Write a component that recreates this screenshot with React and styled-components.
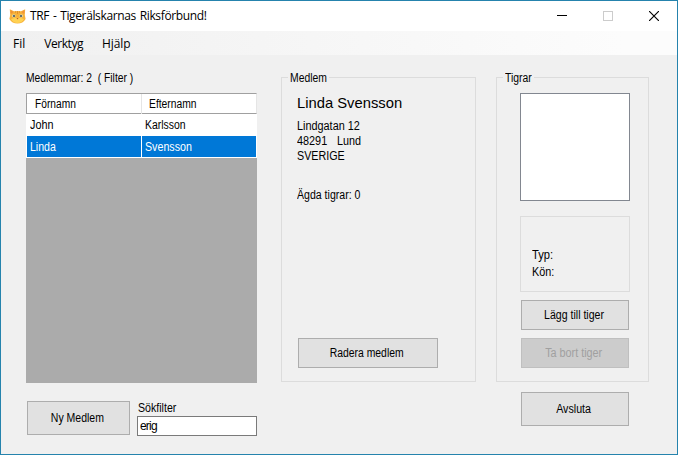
import React from "react";
import styled, { createGlobalStyle } from "styled-components";

const GlobalStyle = createGlobalStyle`
  * { box-sizing: border-box; }
  body { margin: 0; background: #f0f0f0; }
`;

const Window = styled.div`
  width: 678px;
  height: 455px;
  border: 1px solid #2583ad;
  background: #f0f0f0;
  display: flex;
  flex-direction: column;
  overflow: hidden;
  color: #000;
  font-family: "Liberation Sans", Arial, sans-serif;
  font-size: 12px;
`;

const TitleBar = styled.header`
  height: 30px;
  flex: none;
  display: flex;
  align-items: center;
  background: #fff;
  padding-left: 8px;
  font: 12px/28px "Open Sans", "Noto Sans", sans-serif;
`;

const TitleText = styled.div`
  flex: 1;
  margin-left: 4px;
  letter-spacing: -0.36px;
  word-spacing: 1px;
`;

const ControlButton = styled.div`
  width: 46px;
  height: 28px;
  flex: none;
  display: flex;
  align-items: center;
  justify-content: center;
`;

const MenuBar = styled.nav`
  height: 24px;
  flex: none;
  display: flex;
  padding-left: 12px;
  gap: 19px;
  background: linear-gradient(90deg, #f0f0f0, #fcfcfc 92%);
  font: 12px/25px "Open Sans", "Noto Sans", sans-serif;
`;

const MenuItem = styled.div`
  letter-spacing: ${(p) => p.$track || 0}px;
`;

const Text = styled.span`
  display: block;
  white-space: pre;
  transform: scaleX(${(p) => p.$squeeze});
  transform-origin: ${(p) => (p.$center ? "center" : "left")};
`;

const Client = styled.main`
  flex: 1;
  display: grid;
  grid-template-columns: 231px 195px 153px;
  column-gap: 24px;
  padding: 15px 0 0 25px;
  align-items: start;
`;

const Members = styled.section`
  display: flex;
  flex-direction: column;
`;

const ListCaption = styled.div`
  height: 23px;
  line-height: 16px;
`;

const Grid = styled.div`
  height: 290px;
  background: #ababab;
`;

const GridHeader = styled.div`
  display: grid;
  grid-template-columns: 115px 1fr;
  height: 21px;
  background: #fff;
  border: 1px solid #a0a0a0;
  border-right-color: #e5e5e5;
  line-height: 20px;
`;

const HeaderCell = styled.div`
  padding-left: ${(p) => p.$inset}px;
  border-right: ${(p) => (p.$divider ? "1px solid #e5e5e5" : "0")};
`;

const GridRow = styled.div`
  display: grid;
  grid-template-columns: 114px 114px;
  column-gap: 1px;
  height: 22px;
  padding: 0 1px 1px;
  background: #fff;
  line-height: 22px;
  color: ${(p) => (p.$selected ? "#fff" : "#000")};
`;

const Cell = styled.div`
  height: 21px;
  padding-left: 3px;
  background: ${(p) => (p.$selected ? "#0078d7" : "#fff")};
`;

const MemberActions = styled.div`
  display: flex;
  gap: 7px;
  margin: 18px 0 0 1px;
`;

const Button = styled.button`
  flex: none;
  display: flex;
  align-items: center;
  justify-content: center;
  width: ${(p) => p.$width}px;
  height: ${(p) => p.$height}px;
  margin: 0;
  padding: 0 2px 0 0;
  font: inherit;
  color: #000;
  background: #e1e1e1;
  border: 1px solid #adadad;
  &:disabled {
    color: #a0a0a0;
    background: #ccc;
    border-color: #bfbfbf;
  }
`;

const Field = styled.label`
  flex: 1;
  line-height: 15px;
`;

const Input = styled.input`
  display: block;
  width: 120px;
  height: 20px;
  margin: 0;
  padding: 0 2px;
  font: inherit;
  letter-spacing: -0.8px;
  background: #fff;
  border: 1px solid #7a7a7a;
  outline: none;
`;

const FieldLabel = styled.div`
  height: 15px;
  padding-left: 1px;
`;

const Group = styled.fieldset`
  min-width: 0;
  height: 312px;
  margin: 0;
  border: 1px solid #dcdcdc;
  padding: 0 0 13px ${(p) => p.$inset}px;
`;

const Legend = styled.legend`
  width: ${(p) => p.$width}px;
  margin-left: ${(p) => p.$shift}px;
  padding: 0 2px;
  height: 15px;
  line-height: 16px;
`;

const GroupBody = styled.div`
  height: 100%;
  display: flex;
  flex-direction: column;
`;

const MemberName = styled.div`
  font-size: 15px;
  line-height: 20px;
  margin-top: 8px;
`;

const Address = styled.div`
  margin-top: 6px;
  line-height: 15px;
`;

const AddressLine = styled.div`
  display: flex;
  gap: 7px;
`;

const Owned = styled.div`
  margin-top: 24px;
  line-height: 15px;
`;

const BottomAction = styled.div`
  margin: auto 0 0 1px;
`;

const TigerList = styled.div`
  width: 110px;
  height: 108px;
  margin-top: 8px;
  background: #fff;
  border: 1px solid #828790;
`;

const TigerInfo = styled.div`
  width: 110px;
  height: 76px;
  margin-top: 15px;
  padding: 30px 0 0 11px;
  border: 1px solid #dcdcdc;
  line-height: 17px;
`;

const TigerButtons = styled.div`
  display: flex;
  flex-direction: column;
  gap: 8px;
  margin: 8px 0 0 1px;
`;

const Tigers = styled.section`
  margin-left: -4px;
  width: 153px;
`;

const CloseRow = styled.div`
  margin: 10px 0 0 25px;
`;

function CatIcon() {
  return (
    <svg width="17" height="15" viewBox="0 0 17 15">
      <path d="M0.8 0.3 L5 2.3 Q8.5 1.6 12 2.3 L16.2 0.3 L15.8 6 L16.6 10 Q14 14.6 8.5 14.6 Q3 14.6 0.4 10 L1.2 6Z" fill="#f7b23a" />
      <path d="M1.4 1 L4.6 3 L1.9 5Z M15.6 1 L12.4 3 L15.1 5Z" fill="#f0923a" />
      <path d="M2 10 Q8.5 7.5 15 10 Q13 14 8.5 14 Q4 14 2 10Z" fill="#ffd253" />
      <path d="M8 2h1v3H8z M6 2.3h1v1.5H6z M10 2.3h1v1.5h-1z" fill="#e0902c" />
      <ellipse cx="4.8" cy="7" rx="1.7" ry="1.4" fill="#d5dfc9" />
      <ellipse cx="12.2" cy="7" rx="1.7" ry="1.4" fill="#d5dfc9" />
      <circle cx="5" cy="7" r="1.1" fill="#46565a" />
      <circle cx="12" cy="7" r="1.1" fill="#46565a" />
      <path d="M7.5 9h2l-1 1.4z" fill="#b8562f" />
    </svg>
  );
}

const rows = [
  { first: "John", last: "Karlsson", squeeze: [0.9, 0.87] },
  { first: "Linda", last: "Svensson", squeeze: [0.88, 0.89], selected: true },
];

export default function App() {
  return (
    <>
      <GlobalStyle />
      <Window>
        <TitleBar>
          <CatIcon />
          <TitleText>TRF - Tigerälskarnas Riksförbund!</TitleText>
          <ControlButton>
            <svg width="10" height="10" shapeRendering="crispEdges"><path d="M0 4h10v1H0z" /></svg>
          </ControlButton>
          <ControlButton>
            <svg width="10" height="10"><rect x=".5" y=".5" width="9" height="9" fill="none" stroke="#ccc" /></svg>
          </ControlButton>
          <ControlButton>
            <svg width="10" height="10"><path d="M0 0L10 10M10 0L0 10" stroke="#000" strokeWidth="1.15" /></svg>
          </ControlButton>
        </TitleBar>
        <MenuBar>
          <MenuItem>Fil</MenuItem>
          <MenuItem $track={-0.45}>Verktyg</MenuItem>
          <MenuItem $track={-0.1}>Hjälp</MenuItem>
        </MenuBar>
        <Client>
          <Members>
            <ListCaption><Text $squeeze={0.86}>{"Medlemmar: 2  ( Filter )"}</Text></ListCaption>
            <Grid>
              <GridHeader>
                <HeaderCell $inset={8} $divider><Text $squeeze={0.85}>Förnamn</Text></HeaderCell>
                <HeaderCell $inset={7}><Text $squeeze={0.86}>Efternamn</Text></HeaderCell>
              </GridHeader>
              {rows.map((r) => (
                <GridRow key={r.first} $selected={r.selected}>
                  <Cell $selected={r.selected}><Text $squeeze={r.squeeze[0]}>{r.first}</Text></Cell>
                  <Cell $selected={r.selected}><Text $squeeze={r.squeeze[1]}>{r.last}</Text></Cell>
                </GridRow>
              ))}
            </Grid>
            <MemberActions>
              <Button $width={103} $height={34}><Text $center $squeeze={0.875}>Ny Medlem</Text></Button>
              <Field>
                <FieldLabel><Text $squeeze={0.885}>Sökfilter</Text></FieldLabel>
                <Input defaultValue="erig" />
              </Field>
            </MemberActions>
          </Members>

          <Group $inset={15}>
            <Legend $shift={-9} $width={41}><Text $squeeze={0.865}>Medlem</Text></Legend>
            <GroupBody>
              <MemberName><Text $squeeze={0.985}>Linda Svensson</Text></MemberName>
              <Address>
                <Text $squeeze={0.905}>Lindgatan 12</Text>
                <AddressLine>
                  <Text $squeeze={0.905}>48291</Text>
                  <Text $squeeze={0.9}>Lund</Text>
                </AddressLine>
                <Text $squeeze={0.895}>SVERIGE</Text>
              </Address>
              <Owned><Text $squeeze={0.88}>Ägda tigrar: 0</Text></Owned>
              <BottomAction>
                <Button $width={140} $height={30}><Text $center $squeeze={0.865}>Radera medlem</Text></Button>
              </BottomAction>
            </GroupBody>
          </Group>

          <Tigers>
            <Group $inset={23}>
              <Legend $shift={-17} $width={31}><Text $squeeze={0.865}>Tigrar</Text></Legend>
              <GroupBody>
                <TigerList />
                <TigerInfo>
                  <Text $squeeze={0.93}>Typ:</Text>
                  <Text $squeeze={0.9}>Kön:</Text>
                </TigerInfo>
                <TigerButtons>
                  <Button $width={108} $height={30}><Text $center $squeeze={0.88}>Lägg till tiger</Text></Button>
                  <Button $width={108} $height={30} disabled><Text $center $squeeze={0.9}>Ta bort tiger</Text></Button>
                </TigerButtons>
              </GroupBody>
            </Group>
            <CloseRow>
              <Button $width={108} $height={34}><Text $center $squeeze={0.89}>Avsluta</Text></Button>
            </CloseRow>
          </Tigers>
        </Client>
      </Window>
    </>
  );
}
